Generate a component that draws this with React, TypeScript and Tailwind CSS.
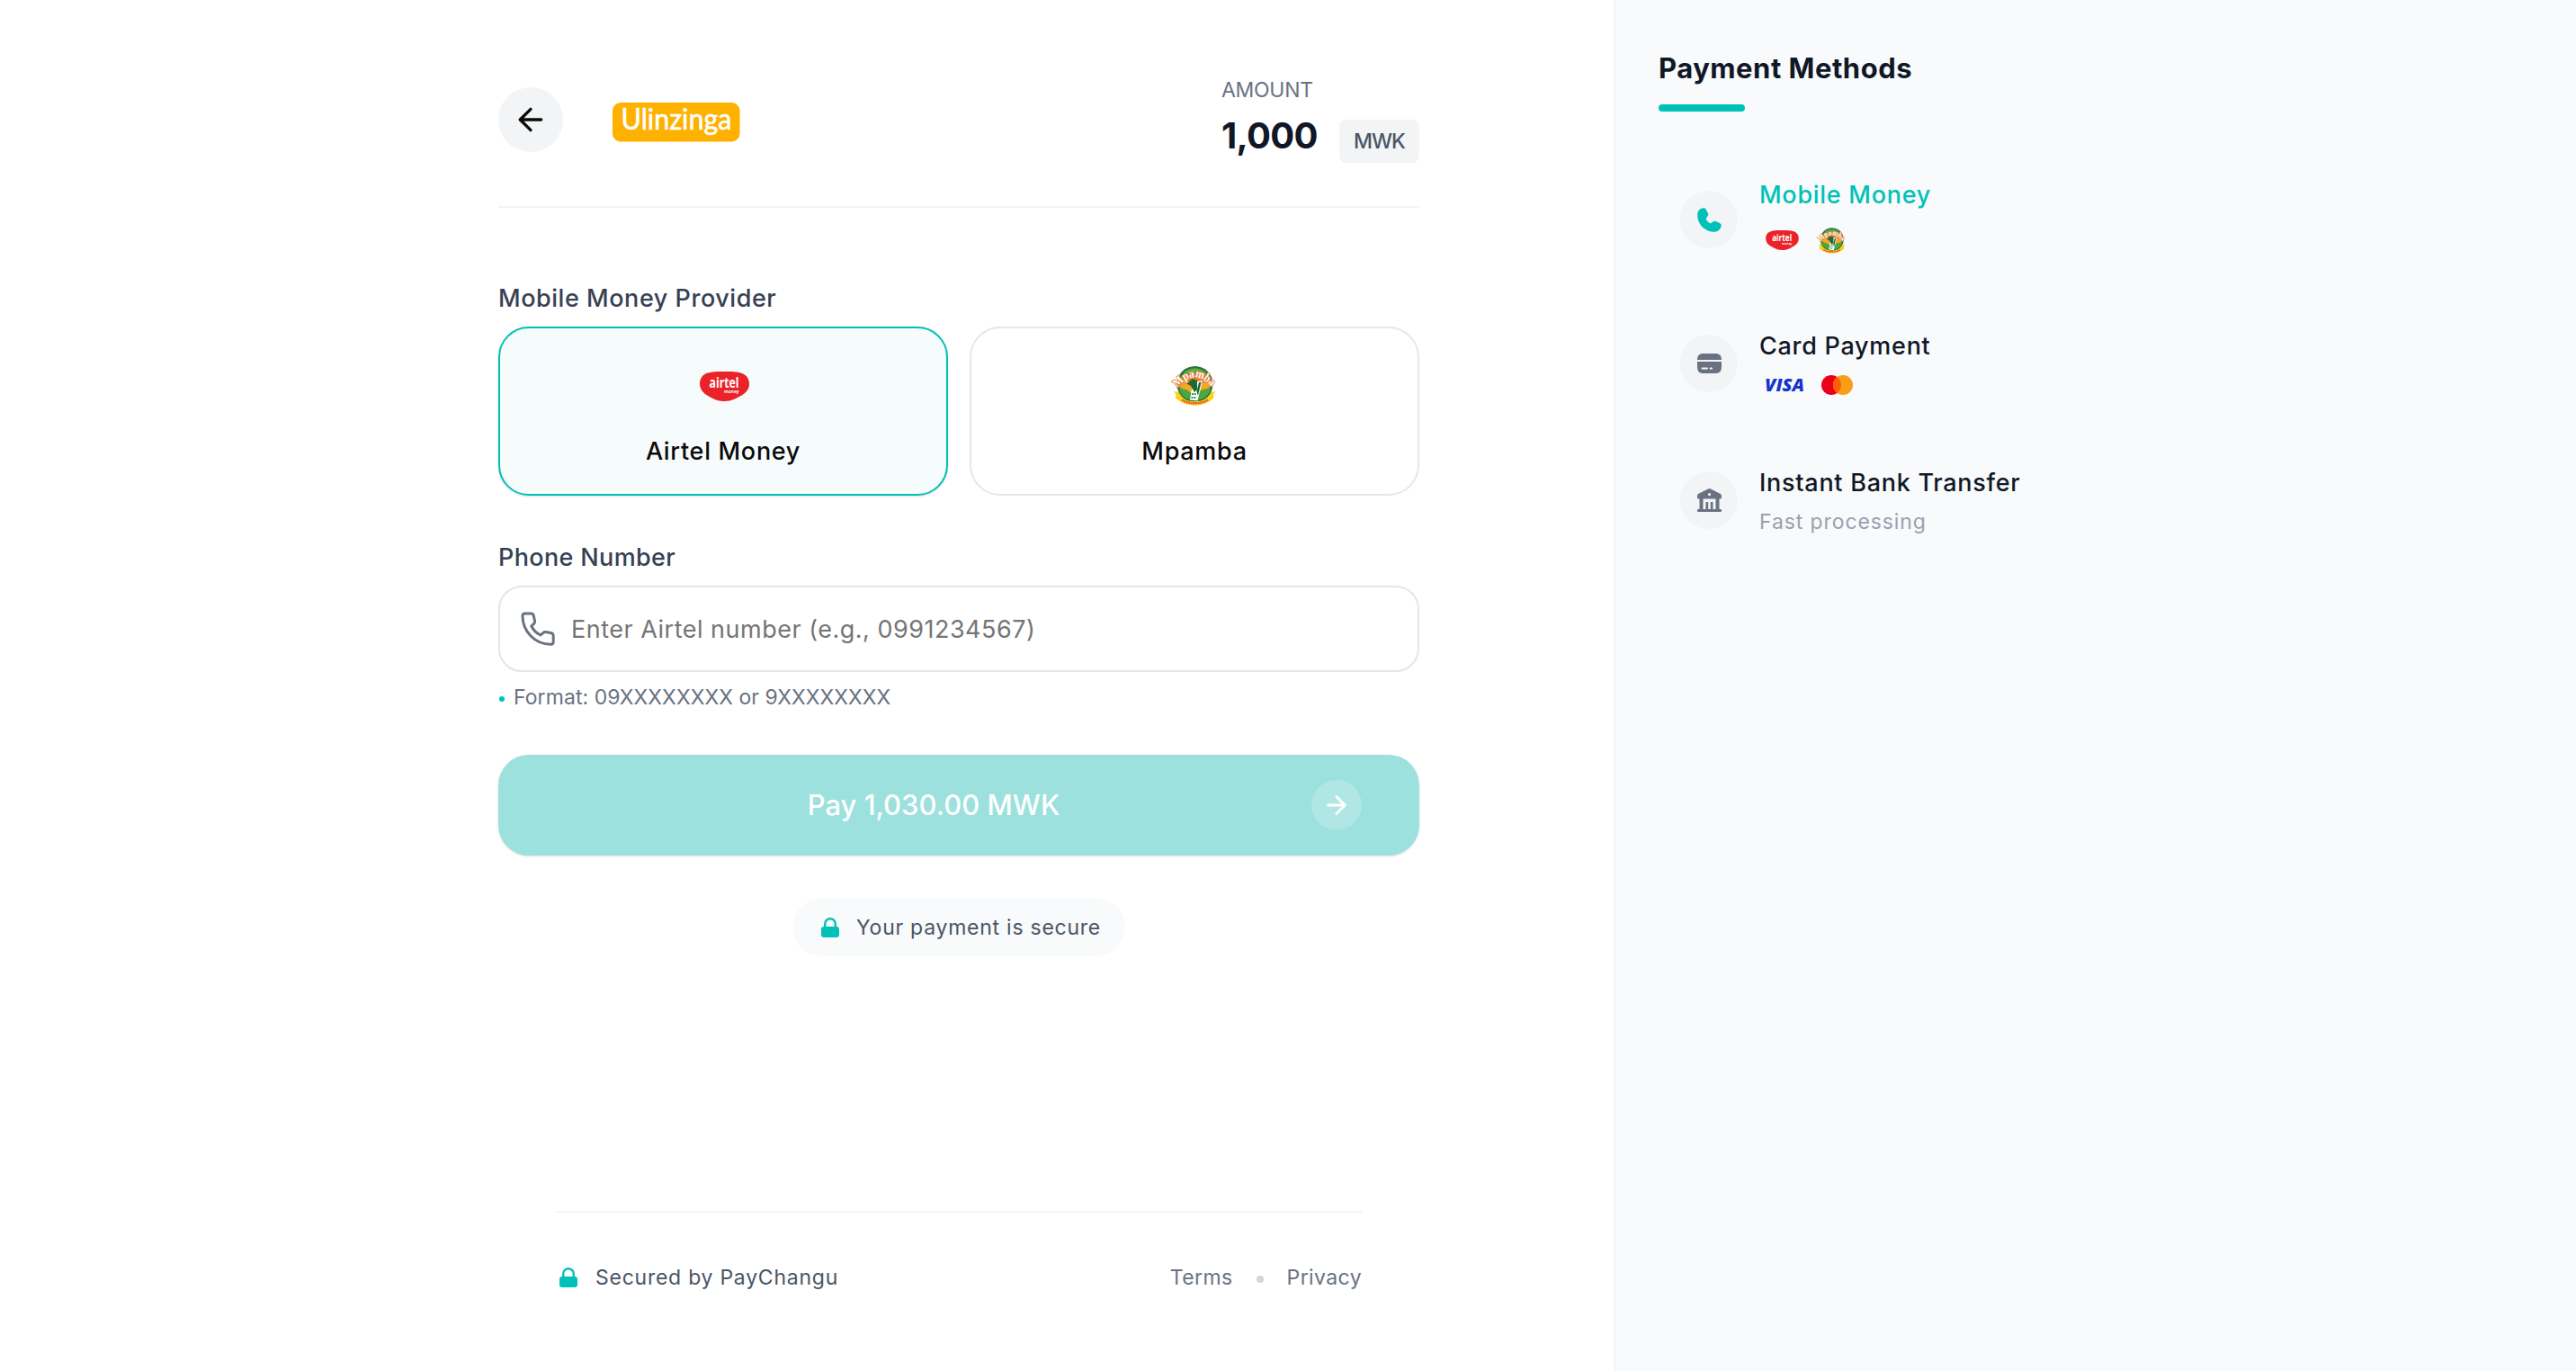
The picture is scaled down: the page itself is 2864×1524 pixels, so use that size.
import { useId } from 'react';
import { ArrowLeft, ArrowRight } from 'lucide-react';

type LogoProps = { className?: string };

function UlinzingaLogo({ className }: LogoProps) {
  return (
    <svg viewBox="0 0 142 44" className={className} overflow="visible">
      <rect width="141.500" height="43.500" rx="9" fill="#ffb100" />
      <text x="9.500" y="30" fontFamily="Lato, sans-serif" fontSize="32" fill="#fff" stroke="#fff" strokeWidth="0.6" strokeLinejoin="round" textLength="123" lengthAdjust="spacingAndGlyphs">
        Ulinzinga
      </text>
    </svg>
  );
}

function AirtelLogo({ className }: LogoProps) {
  return (
    <svg viewBox="0 0 55 33" className={className} overflow="visible">
      <path d="M27 0C38 0 45 .2 50 3.500C53.500 6 55 9.500 55 14C55 19 52 23.500 46.500 26.500C40 30 36 33 27.500 33C20 33 16 30.800 10 27.500C4 24.500 0 19.500 0 13.500C0 8.500 2 5 5.500 3C10 .4 17 0 27 0Z" fill="#eb2227" />
      <text x="10.500" y="18" fontFamily="Open Sans, sans-serif" fontWeight="700" fontSize="15.500" fill="#fff" textLength="33" lengthAdjust="spacingAndGlyphs">
        airtel
      </text>
      <text x="27" y="24" fontFamily="Open Sans, sans-serif" fontWeight="700" fontSize="6" fill="#fff" textLength="16.500" lengthAdjust="spacingAndGlyphs">
        money
      </text>
    </svg>
  );
}

function MpambaLogo({ className }: LogoProps) {
  const arcId = useId();

  return (
    <svg viewBox="0 0 48 44" className={className} overflow="visible">
      <path d="M1 28L7 29L24 40L41 29L47.500 28L44.500 32L45.500 35C34 46 15 46 2.500 35L4 32Z" fill="#fbcf1f" />
      <circle cx="24.500" cy="20" r="20" fill="#2b7439" />
      <circle cx="24.500" cy="20" r="17.500" fill="#5fae48" />
      <path d="M8 23C9 8 40 8 41 23L31 30H18Z" fill="#f9a524" />
      <path d="M14 17C19 12 30 12 35 17L32 21H17Z" fill="#ef7a2c" />
      <path d="M7 26C14 24 19 27 24 35C29 27 34 24 42 26C40 33 34 38 24.500 38S9 33 7 26Z" fill="#4ca63f" />
      <path d="M4 31C14 42 35 42 44.500 31L45.500 35C34 46.500 15 46.500 3 35Z" fill="#fbcf1f" />
      <path d="M10 37.500C18 42.500 31 42.500 39 37.500" fill="none" stroke="#e85a2a" strokeWidth="2.400" strokeDasharray="2 .6" />
      <path d="M27 17L33 16L27.500 38.500L19 37.500L21 25L25 27Z" fill="#fff" />
      <path d="M15 19L22 14L27 16V26L24 29L20 22Z" fill="#1d6b34" />
      <path d="M29 18L31.500 17.500L28 33L26.500 28Z" fill="#1d6b34" />
      <path d="M21 31H26M20.500 35H25.500" stroke="#2c9a48" strokeWidth="2.200" strokeDasharray="2 .8" />
      <path id={arcId} d="M5 24Q24.500 1 44 24" fill="none" />
      <text fontFamily="Liberation Serif, serif" fontWeight="700" fontSize="13" fill="#fff" stroke="#ee7a35" strokeWidth="1.600" paintOrder="stroke">
        <textPath href={`#${arcId}`} textLength="45" lengthAdjust="spacingAndGlyphs">Mpamba</textPath>
      </text>
    </svg>
  );
}

function VisaLogo({ className }: LogoProps) {
  return (
    <svg viewBox="0 0 44 14" className={className} overflow="visible">
      <text x="0" y="14" fontFamily="Open Sans, sans-serif" fontWeight="800" fontStyle="italic" fontSize="19.500" fill="#1434cb" textLength="44" lengthAdjust="spacingAndGlyphs">
        VISA
      </text>
    </svg>
  );
}

function MastercardLogo({ className }: LogoProps) {
  return (
    <svg viewBox="0 0 35 22" className={className}>
      <circle cx="11" cy="11" r="11" fill="#eb001b" />
      <circle cx="24" cy="11" r="11" fill="#f79e1b" />
      <path d="M17.500 2.100a11 11 0 0 1 0 17.800a11 11 0 0 1 0-17.800Z" fill="#ff5f00" />
    </svg>
  );
}

function LockIcon({ className }: LogoProps) {
  return (
    <svg viewBox="0 0 20 22" className={className}>
      <path d="M4.200 11V7a5.800 5.800 0 0 1 11.600 0V11" fill="none" stroke="currentColor" strokeWidth="2.400" />
      <rect y="10" width="20" height="12" rx="3" fill="currentColor" />
    </svg>
  );
}

function PhoneOutlineIcon({ className }: LogoProps) {
  return (
    <svg viewBox="0 0 38 38" className={className} fill="none" stroke="currentColor" strokeWidth="3" strokeLinejoin="round">
      <path d="M4.500 2H11.500C13 2 13.800 2.600 14.200 4L15.600 10.500C15.800 11.800 15.600 12.300 14.800 13.200L11.800 16C14 20.500 17.800 24 22 26L25 23.300C26 22.500 26.800 22.300 28 22.500L34 23.700C35.400 24 36.200 25 36.200 26.500V33.500C36.200 35.300 35 36.200 33.200 36.200C16 36.200 2 22 2 4.800C2 3 3 2 4.500 2Z" />
    </svg>
  );
}

function PhoneSolidIcon() {
  return (
    <svg viewBox="0 0 27 27" className="h-[27px] w-[27px]" fill="currentColor">
      <path d="M2.500 2C4 .5 6 .1 7.800.2C8.800.3 9.300 1 9.700 1.800L12 6.200C12.500 7.200 12.400 8 11.800 8.900L10.300 11.200C9.700 12.100 9.700 12.700 10.200 13.500C11.200 15 12.300 16.200 13.700 17C14.400 17.400 15 17.300 15.700 16.800L18 15.200C18.900 14.600 19.700 14.500 20.700 15L25.200 17.200C26.300 17.800 26.900 18.500 26.700 19.700C26.200 24 23 26.900 18.500 26.800C8.500 26.400.5 18.500.2 8.500C.1 6 .7 3.700 2.500 2Z" />
    </svg>
  );
}

function CardIcon() {
  return (
    <svg viewBox="0 0 27 22" className="h-[22px] w-[27px]">
      <path d="M0 7C.2 2 2 0 7 0H20C25 0 26.800 2 27 7Z" fill="currentColor" />
      <path d="M0 9H27V14C27 20 25 22 20 22H7C2 22 0 20 0 14Z" fill="currentColor" />
      <path d="M5.500 16.500H11M14.500 16.500H16" stroke="#f3f4f6" strokeWidth="2" strokeLinecap="round" />
    </svg>
  );
}

function BankIcon() {
  return (
    <svg viewBox="0 0 27 26" className="h-[26px] w-[27px]" fill="currentColor">
      <path fillRule="evenodd" d="M12 .5Q13.500-.3 15 .5L25.500 5.700Q27 6.500 27 8V10Q27 11.500 25.500 11.500H1.500Q0 11.500 0 10V8Q0 6.500 1.500 5.700ZM13.500 5a1.600 1.600 0 1 0 0 3.200a1.600 1.600 0 1 0 0-3.200Z" />
      <path d="M2.500 11H6.500V24H2.500ZM9.500 15H12.200V24H9.500ZM14.800 15H17.500V24H14.800ZM20.500 11H24.500V24H20.500Z" />
      <rect y="23" width="27" height="3" rx="1" />
    </svg>
  );
}

export default function App() {
  const providers = [
    {
      name: 'Airtel Money',
      logo: <AirtelLogo className="ml-[2px] h-[33px] w-[55px]" />,
      style: 'border-[#00c1b8] bg-[#f6fcfc] shadow-sm',
    },
    {
      name: 'Mpamba',
      logo: <MpambaLogo className="h-11 w-12" />,
      style: 'border-gray-200 bg-white',
    },
  ];

  const methods = [
    {
      title: 'Mobile Money',
      icon: <PhoneSolidIcon />,
      color: 'text-[#00c1b8]',
      row: 'mt-[72px] h-[96px]',
      iconMargin: 'mt-4',
      iconColor: 'text-[#00c1b8]',
      detail: (
        <div className="mt-[15px] flex h-[30px] items-center gap-[21px] pl-[7px]">
          <AirtelLogo className="h-[22px] w-[37px]" />
          <MpambaLogo className="h-[29px] w-[31px]" />
        </div>
      ),
    },
    {
      title: 'Card Payment',
      icon: <CardIcon />,
      color: 'text-gray-900',
      row: 'mt-[72px] h-[80px]',
      iconMargin: 'mt-[8px]',
      iconColor: 'text-gray-500',
      detail: (
        <div className="mt-3 flex h-[22px] items-center gap-[19px] pl-[6px]">
          <VisaLogo className="h-[14px] w-[44px]" />
          <MastercardLogo className="h-[22px] w-[35px]" />
        </div>
      ),
    },
    {
      title: 'Instant Bank Transfer',
      icon: <BankIcon />,
      color: 'text-gray-900',
      row: 'mt-[72px] h-[80px]',
      iconMargin: 'mt-[8px]',
      iconColor: 'text-gray-500',
      detail: <p className="mt-[7px] text-[23px] leading-8 tracking-[0.9px] text-gray-400">Fast processing</p>,
    },
  ];

  return (
    <div className="flex h-[1524px] w-[2864px] overflow-hidden bg-white font-[Inter,sans-serif]">
      <main className="flex w-[1794px] flex-col pl-[554px]">
        <header className="flex h-[231px] w-[1024px] items-start justify-between border-b-2 border-gray-100 pt-[84px]">
          <div className="flex items-center gap-[55px] pt-[13px]">
            <button className="flex h-18 w-18 items-center justify-center rounded-full bg-gray-100 text-neutral-950">
              <ArrowLeft className="h-10 w-10" />
            </button>
            <UlinzingaLogo className="mt-[5px] h-11 w-[142px]" />
          </div>
          <div className="w-[220px]">
            <p className="text-[23px] leading-8 tracking-[-0.3px] text-gray-500">AMOUNT</p>
            <div className="mt-[11px] flex items-start justify-between">
              <p className="text-[40px] leading-12 font-bold tracking-[-0.7px] text-gray-900">1,000</p>
              <span className="mt-[6px] flex h-12 w-[89px] items-center justify-center rounded-lg bg-gray-100 text-[23px] font-medium tracking-[-1px] text-gray-600">
                MWK
              </span>
            </div>
          </div>
        </header>

        <section className="w-[1024px] pt-[81px]">
          <h2 className="text-[27px] leading-10 font-medium tracking-[0.54px] text-gray-700">Mobile Money Provider</h2>
          <div className="mt-[11px] grid grid-cols-2 gap-6">
            {providers.map((provider) => (
              <button
                key={provider.name}
                className={`flex h-[188px] flex-col items-center rounded-[34px] border-2 pt-[40px] ${provider.style}`}
              >
                <span className="flex h-12 items-center">{provider.logo}</span>
                <span className="mt-[29px] text-[27px] leading-10 font-medium tracking-[0.7px] text-neutral-950">
                  {provider.name}
                </span>
              </button>
            ))}
          </div>
        </section>

        <section className="w-[1024px] pt-[49px]">
          <label className="block text-[27px] leading-10 font-medium tracking-[0.35px] text-gray-700">Phone Number</label>
          <div className="mt-[11px] flex h-24 items-center rounded-[26px] border-2 border-neutral-200 pl-[23px]">
            <PhoneOutlineIcon className="h-[38px] w-[38px] text-gray-500" />
            <input
              className="ml-[18px] flex-1 bg-transparent pt-[2px] text-[27px] tracking-[0.5px] outline-none placeholder:text-[#757575]"
              placeholder="Enter Airtel number (e.g., 0991234567)"
            />
          </div>
          <p className="mt-[10px] flex items-center text-[23px] leading-9 tracking-[0.07px] text-gray-500">
            <span className="mt-[4px] mr-[10px] ml-[1px] h-[6px] w-[6px] rounded-full bg-[#00c1b8]" />
            Format: 09XXXXXXXX or 9XXXXXXXX
          </p>
        </section>

        <button className="mt-[46px] flex h-28 w-[1024px] items-center rounded-[34px] bg-[#9ce1dd] pr-16 shadow-sm">
          <span className="flex-1 pl-[64px] text-center text-[31px] font-medium text-white">Pay 1,030.00 MWK</span>
          <span className="flex h-14 w-14 items-center justify-center rounded-full bg-[#b0e7e4] text-white">
            <ArrowRight className="h-8 w-8" strokeWidth={2.2} />
          </span>
        </button>

        <div className="mt-12 ml-[327px] flex h-16 w-[370px] items-center rounded-full bg-gray-50 pl-8">
          <LockIcon className="h-[22px] w-5 text-[#00c1b8]" />
          <span className="ml-[19px] text-[23px] tracking-[0.75px] text-gray-600">Your payment is secure</span>
        </div>

        <footer className="mt-[283px] ml-16 flex w-[896px] items-center border-t-2 border-gray-100 pt-[54px] text-[23px] leading-9">
          <LockIcon className="ml-1 h-[22px] w-5 text-[#00c1b8]" />
          <span className="ml-5 tracking-[0.75px] text-gray-600">Secured by PayChangu</span>
          <div className="ml-auto flex items-center tracking-[0.4px] text-gray-500">
            <span>Terms</span>
            <span className="mt-1 mr-[26px] ml-[26px] h-2 w-2 rounded-full bg-gray-300" />
            <span>Privacy</span>
          </div>
        </footer>
      </main>

      <aside className="flex-1 border-l-2 border-gray-100 bg-gray-50 pt-[54px] pl-12">
        <h1 className="text-[31px] leading-[44px] font-bold tracking-[0.5px] text-gray-900">Payment Methods</h1>
        <div className="mt-[18px] h-2 w-24 rounded-full bg-[#00c1b8]" />
        {methods.map((method) => (
          <div key={method.title} className={`flex items-start pl-6 ${method.row}`}>
            <div className={`flex h-16 w-16 items-center justify-center rounded-full bg-gray-100 ${method.iconMargin} ${method.iconColor}`}>
              {method.icon}
            </div>
            <div className="ml-6 pt-px">
              <h3 className={`text-[27px] leading-10 font-medium tracking-[0.72px] ${method.color}`}>{method.title}</h3>
              {method.detail}
            </div>
          </div>
        ))}
      </aside>
    </div>
  );
}
